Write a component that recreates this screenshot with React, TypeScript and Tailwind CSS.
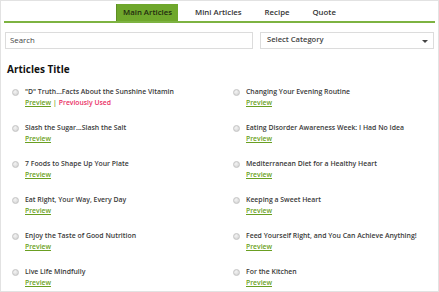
const left = [
  { title: '"D" Truth...Facts About the Sunshine Vitamin', used: true },
  { title: 'Slash the Sugar...Slash the Salt' },
  { title: '7 Foods to Shape Up Your Plate' },
  { title: 'Eat Right, Your Way, Every Day' },
  { title: 'Enjoy the Taste of Good Nutrition' },
  { title: 'Live Life Mindfully' },
]

const right = [
  { title: 'Changing Your Evening Routine' },
  { title: 'Eating Disorder Awareness Week: I Had No Idea' },
  { title: 'Mediterranean Diet for a Healthy Heart' },
  { title: 'Keeping a Sweet Heart' },
  { title: 'Feed Yourself Right, and You Can Achieve Anything!' },
  { title: 'For the Kitchen' },
]

type Item = { title: string; used?: boolean }

function Article({ item }: { item: Item }) {
  return (
    <div className="flex h-[36px] items-start">
      <span className="mt-[3px] ml-[5px] h-[7px] w-[7px] shrink-0 rounded-full border border-[#c4c4c4] bg-[radial-gradient(circle_at_40%_35%,#f4f4f4,#cfcfcf)]" />
      <div className="ml-[6px] flex flex-col">
        <span className="text-[6.9px] leading-[11px] font-semibold text-[#3a3a3a]">{item.title}</span>
        <span className="text-[6.8px] leading-[11px] font-semibold">
          <a className="text-[#6a9f22] underline underline-offset-1">Preview</a>
          {item.used && (
            <>
              <span className="mx-[2px] text-[#6a9f22]">|</span>
              <span className="text-[#ea2e64]">Previously Used</span>
            </>
          )}
        </span>
      </div>
    </div>
  )
}

export default function App() {
  return (
    <div className="h-[292px] w-[439px] overflow-hidden border border-[#e2e2e2] bg-white font-['Open_Sans',sans-serif] text-[#333]">
      <div className="mx-[3px] mt-[3px] flex border-b-2 border-[#7db341] pl-[112px]">
        <div className="flex h-[17px] items-center gap-[11px] text-[7.8px] font-semibold">
          <span className="flex h-full items-center border-l border-[#5d8f22] bg-[#6fa72c] px-[6px] text-[#1f2a10]">Main Articles</span>
          <span className="px-[6px] text-[#333]">Mini Articles</span>
          <span className="px-[6px] text-[#333]">Recipe</span>
          <span className="px-[6px] text-[#333]">Quote</span>
        </div>
      </div>
      <div className="mt-[9px] flex gap-[7px] px-[4px]">
        <div className="flex h-[17px] w-[248px] items-center border border-[#dcdcdc] px-[4px] text-[7.8px] text-[#444]">Search</div>
        <div className="flex h-[17px] w-[174px] items-center justify-between border border-[#dcdcdc] pr-[5px] pl-[6px] text-[7.6px] font-semibold text-[#444]">
          <span className="-mt-[2px]">Select Category</span>
          <span className="mt-[2px] h-0 w-0 border-x-[3px] border-t-[3px] border-x-transparent border-t-[#444]" />
        </div>
      </div>
      <h2 className="mt-[13px] ml-[6px] text-[10px] leading-[14px] font-bold text-[#111]">Articles Title</h2>
      <div className="mt-[10px] grid grid-cols-[221px_1fr] pl-[6px]">
        <div className="flex flex-col">
          {left.map((item) => (
            <Article key={item.title} item={item} />
          ))}
        </div>
        <div className="flex flex-col">
          {right.map((item) => (
            <Article key={item.title} item={item} />
          ))}
        </div>
      </div>
    </div>
  )
}
